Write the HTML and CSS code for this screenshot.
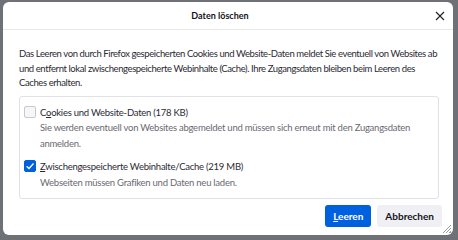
FILE: index.html
```html
<!DOCTYPE html>
<html lang="de">
<head>
    <meta charset="UTF-8">
    <title>Daten löschen</title>
    <link rel="stylesheet" href="styles.css">
</head>
<body>
    <div class="dialog">
        <div class="dialog-header">
            <span class="dialog-title">Daten löschen</span>
            <button class="close-btn" aria-label="Schließen">
                <svg width="10" height="10" viewBox="0 0 10 10">
                    <path d="M1 1 L9 9 M9 1 L1 9" stroke="#202020" stroke-width="1.1" fill="none"/>
                </svg>
            </button>
        </div>

        <div class="dialog-body">
            <p class="intro">Das Leeren von durch Firefox gespeicherten Cookies und Website-Daten meldet Sie eventuell von Websites ab und entfernt lokal zwischengespeicherte Webinhalte (Cache). Ihre Zugangsdaten bleiben beim Leeren des Caches erhalten.</p>

            <div class="options">
                <label class="option">
                    <span class="checkbox"></span>
                    <span class="option-text">
                        <span class="option-label">C<u>o</u>okies und Website-Daten (178 KB)</span>
                        <span class="option-desc">Sie werden eventuell von Websites abgemeldet und müssen sich erneut mit den Zugangsdaten anmelden.</span>
                    </span>
                </label>
                <label class="option">
                    <span class="checkbox checked">
                        <svg width="10" height="10" viewBox="0 0 10 10">
                            <path d="M1.6 5.2 L4 7.5 L8.5 2.5" stroke="#fff" stroke-width="1.3" fill="none"/>
                        </svg>
                    </span>
                    <span class="option-text">
                        <span class="option-label"><u>Z</u>wischengespeicherte Webinhalte/Cache (219 MB)</span>
                        <span class="option-desc">Webseiten müssen Grafiken und Daten neu laden.</span>
                    </span>
                </label>
            </div>
        </div>

        <div class="dialog-footer">
            <button class="btn btn-primary"><u>L</u>eeren</button>
            <button class="btn">Abbrechen</button>
        </div>
        <span class="grip"></span>
    </div>
</body>
</html>
```

FILE: styles.css
```css
body {
    margin: 0;
    width: 458px;
    height: 240px;
    background: #6e7277;
    font-family: 'Lato', 'Noto Sans', sans-serif;
    font-size: 9.5px;
    letter-spacing: -0.25px;
    color: #2b2a33;
    overflow: hidden;
}

.dialog {
    position: relative;
    box-sizing: border-box;
    margin: 2px 0 0 3px;
    width: 450px;
    height: 233px;
    background: #fff;
    border-radius: 6px;
    display: flex;
    flex-direction: column;
}

.dialog-header {
    position: relative;
    height: 27px;
    padding-right: 16px;
    display: flex;
    align-items: center;
    justify-content: center;
    border-bottom: 1px solid #e8e8ea;
}

.dialog-title {
    font-size: 9px;
    font-weight: 700;
    letter-spacing: 0;
    color: #15141a;
}

.close-btn {
    position: absolute;
    right: 8px;
    top: 9px;
    width: 10px;
    height: 10px;
    padding: 0;
    border: none;
    background: none;
    display: flex;
    align-items: center;
    justify-content: center;
}

.dialog-body {
    padding: 17px 14px 0 16px;
}

.intro {
    margin: 0 -4px 5px 0;
    line-height: 14.5px;
    letter-spacing: -0.4px;
}

.options {
    border: 1px solid #e2e2e6;
    border-radius: 3px;
    padding: 8px 6px 8px 4px;
    display: flex;
    flex-direction: column;
    gap: 8px;
}

.option {
    display: flex;
    gap: 4px;
    line-height: 15.5px;
}

.checkbox {
    flex: none;
    box-sizing: border-box;
    width: 12px;
    height: 12px;
    margin-top: 1px;
    border: 1px solid #c9c9cc;
    border-radius: 2px;
    background: #f6f6f8;
    display: flex;
    align-items: center;
    justify-content: center;
}

.checkbox.checked {
    background: #0061e0;
    border-color: #0061e0;
}

.option-text {
    display: flex;
    flex-direction: column;
}

.option-desc {
    color: #6b6a72;
}

u {
    text-decoration-thickness: 1px;
}

.dialog-footer {
    display: flex;
    justify-content: flex-end;
    gap: 6px;
    padding: 6px 11px 0 0;
}

.btn {
    font-family: inherit;
    font-size: 10px;
    font-weight: 700;
    letter-spacing: 0;
    height: 22px;
    padding: 0 8px;
    border: none;
    border-radius: 3px;
    background: #f0f0f4;
    color: #15141a;
}

.btn-primary {
    background: #0061e0;
    color: #fff;
    padding: 0 8px;
}

.grip {
    position: absolute;
    right: 2px;
    bottom: 2px;
    width: 8px;
    height: 8px;
    background: linear-gradient(135deg, transparent 45%, #9a9a9a 45%, #9a9a9a 52%, transparent 52%, transparent 65%, #9a9a9a 65%, #9a9a9a 72%, transparent 72%, transparent 85%, #9a9a9a 85%);
}
```
